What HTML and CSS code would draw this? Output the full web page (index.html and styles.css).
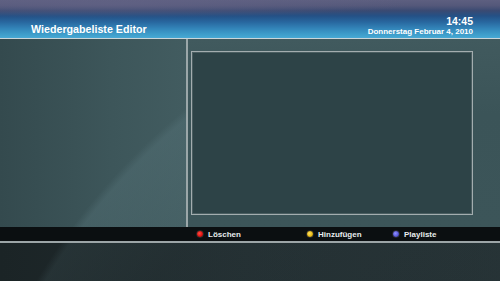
FILE: index.html
```html
<!DOCTYPE html>
<html lang="de">
<head>
    <meta charset="UTF-8">
    <meta name="viewport" content="width=device-width, initial-scale=1.0">
    <title>Wiedergabeliste Editor</title>
    <link rel="stylesheet" href="styles.css">
</head>
<body>
    <div class="screen">
        <header class="top-bar">
            <h1 class="title">Wiedergabeliste Editor</h1>
            <div class="clock">
                <div class="time">14:45</div>
                <div class="date">Donnerstag Februar 4, 2010</div>
            </div>
        </header>

        <div class="main">
            <div class="list-panel"></div>
            <div class="divider"></div>
            <div class="preview-panel">
                <div class="preview-box"></div>
            </div>
        </div>

        <div class="keys">
            <div class="key"><span class="dot red"></span>Löschen</div>
            <div class="key"><span class="dot yellow"></span>Hinzufügen</div>
            <div class="key"><span class="dot blue"></span>Playliste</div>
        </div>

        <div class="bottom-area"></div>
    </div>
</body>
</html>
```

FILE: styles.css
```css
body {
    margin: 0;
    font-family: "Liberation Sans", Arial, sans-serif;
    background-color: #1f2a2d;
}
.screen {
    width: 500px;
    height: 281px;
    display: flex;
    flex-direction: column;
    overflow: hidden;
}
.top-bar {
    height: 39px;
    flex-shrink: 0;
    display: flex;
    justify-content: space-between;
    align-items: flex-end;
    padding: 0 27px 1px 31px;
    box-sizing: border-box;
    border-bottom: 1px solid #c9d5d9;
    background:
        radial-gradient(ellipse 300px 14px at 110px 4px, rgba(100, 100, 135, 0.6), rgba(100, 100, 135, 0) 100%),
        linear-gradient(180deg, #5d5f80 0%, #54587a 15%, #3a4a72 28%, #245186 42%, #28679f 58%, #3385b9 75%, #3e9dca 90%, #47a9d4 100%);
    color: #fff;
}
.title {
    margin: 0 0 2px 0;
    font-size: 10.7px;
    line-height: 12px;
    font-weight: bold;
}
.clock {
    text-align: right;
    font-weight: bold;
}
.time {
    font-size: 10.5px;
    line-height: 11px;
}
.date {
    font-size: 8px;
    line-height: 10px;
}
.main {
    height: 188px;
    flex-shrink: 0;
    display: flex;
}
.list-panel {
    width: 186px;
    background:
        radial-gradient(circle at 600px 620px, rgba(90, 120, 126, 0) 0px, rgba(90, 120, 126, 0.15) 560px, rgba(90, 120, 126, 0.35) 650px, rgba(90, 120, 126, 0) 658px),
        linear-gradient(90deg, #344a4e 0%, #3d565a 60%, #425c60 100%);
    background-attachment: fixed, scroll;
}
.divider {
    width: 2px;
    background-color: #9ba7a9;
}
.preview-panel {
    flex: 1;
    padding: 12px 27px 12px 3px;
    background: linear-gradient(180deg, #415a5e 0%, #3b5458 40%, #3c5559 100%);
}
.preview-box {
    height: 100%;
    box-sizing: border-box;
    border: 1px solid #a3adaf;
    box-shadow: inset 0 0 0 1px #4a5e61;
    background-color: #2d4347;
}
.keys {
    height: 16px;
    flex-shrink: 0;
    box-sizing: border-box;
    display: grid;
    grid-template-columns: 110px 86px auto;
    align-items: center;
    padding-left: 196px;
    background-color: #0b0f11;
    border-bottom: 2px solid #9ca5a7;
    color: #e8ecee;
    font-size: 8px;
    font-weight: bold;
}
.key {
    display: flex;
    align-items: center;
}
.dot {
    width: 6px;
    height: 6px;
    border-radius: 50%;
    margin-right: 4px;
    border: 1px solid #2a2a2a;
}
.red {
    background: radial-gradient(circle at 40% 40%, #ff4a40, #e0100f 60%, #a00808);
}
.yellow {
    background: radial-gradient(circle at 40% 40%, #ffe060, #e8b810 60%, #a88000);
}
.blue {
    background: radial-gradient(circle at 40% 40%, #9090ff, #5656d6 60%, #34349a);
}
.bottom-area {
    flex: 1;
    background:
        radial-gradient(circle at 600px 620px, rgba(60, 80, 84, 0) 0px, rgba(60, 80, 84, 0.15) 560px, rgba(60, 80, 84, 0.3) 650px, rgba(60, 80, 84, 0) 658px),
        linear-gradient(90deg, #1b2426 0%, #212c2f 50%, #243033 100%);
    background-attachment: fixed, scroll;
}
```
